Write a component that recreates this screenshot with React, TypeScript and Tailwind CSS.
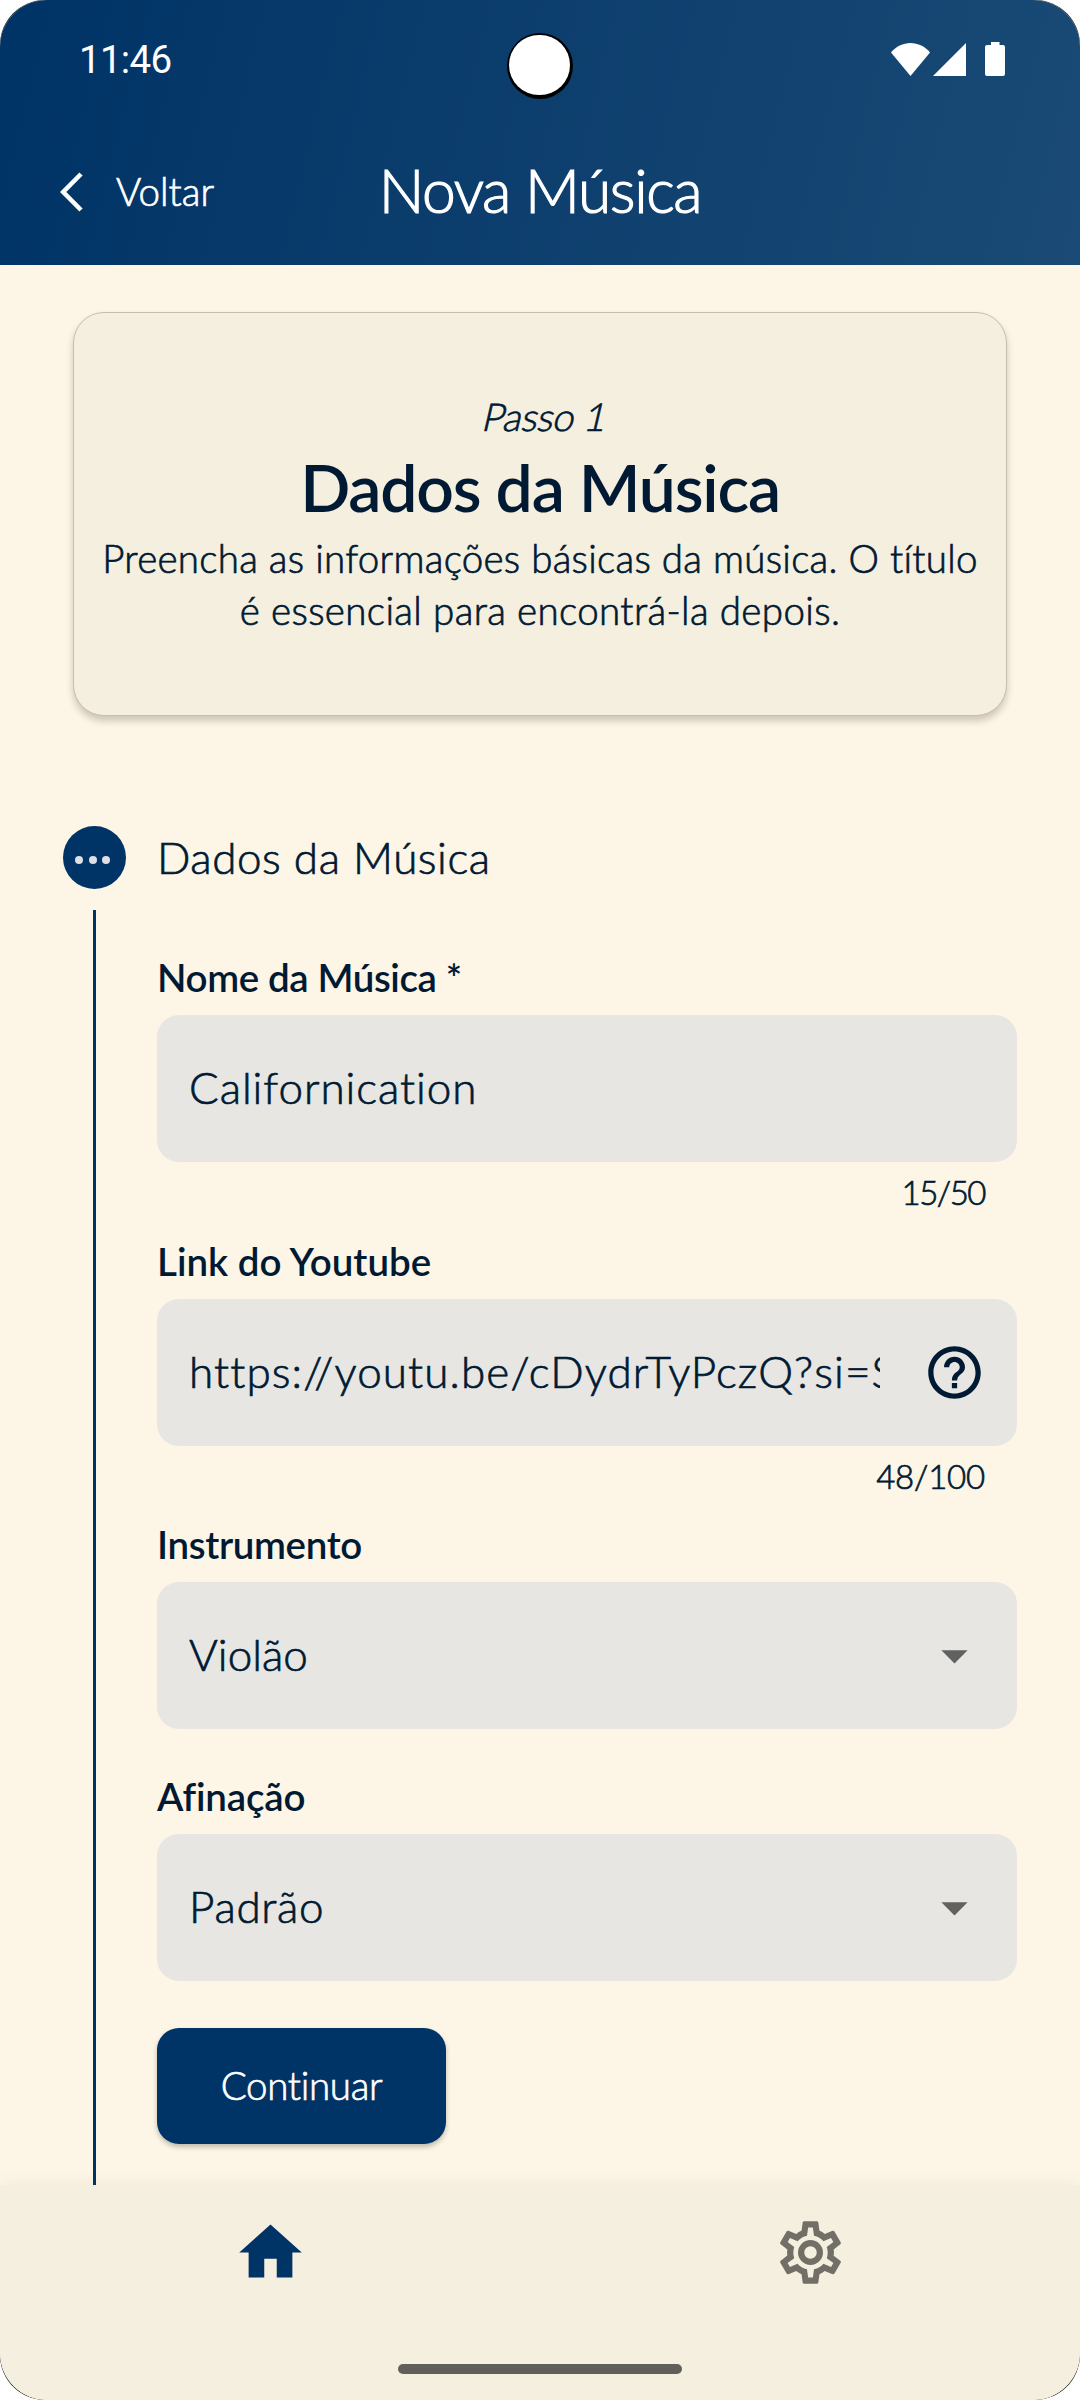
import type { ReactNode } from 'react';

const light = 'font-light [-webkit-text-stroke:0.7px_currentColor]';

function Label({ children, className }: { children: ReactNode; className: string }) {
  return (
    <div className={`h-[46px] mb-4 pt-px text-[38.5px] leading-[46px] font-semibold whitespace-nowrap ${className}`}>{children}</div>
  );
}

function Field({ children, icon, className }: { children: ReactNode; icon?: ReactNode; className: string }) {
  return (
    <div className="flex h-[147px] w-[860px] items-center justify-between rounded-[22px] bg-[#e7e6e2] pl-[32px] pr-[31px]">
      <div className={`w-[691px] overflow-hidden pb-[3px] text-[44px] leading-[56px] whitespace-nowrap ${light} ${className}`}>{children}</div>
      {icon}
    </div>
  );
}

function HelpIcon() {
  return (
    <svg viewBox="0 0 24 24" className="size-[63px] shrink-0 fill-[#001a33]">
      <path d="M11 18h2v-2h-2v2zm1-16C6.48 2 2 6.48 2 12s4.48 10 10 10 10-4.48 10-10S17.52 2 12 2zm0 18c-4.41 0-8-3.59-8-8s3.59-8 8-8 8 3.59 8 8-3.59 8-8 8zm0-14c-2.21 0-4 1.79-4 4h2c0-1.1.9-2 2-2s2 .9 2 2c0 2-3 1.75-3 5h2c0-2.25 3-2.5 3-5 0-2.21-1.79-4-4-4z" />
    </svg>
  );
}

function DropIcon() {
  return (
    <svg viewBox="0 0 24 24" className="size-[63px] shrink-0 fill-[#61615f]">
      <path d="M7 10l5 5 5-5z" />
    </svg>
  );
}

export default function App() {
  return (
    <div className="h-[2400px] w-[1080px] overflow-hidden rounded-[45px] bg-[#1c1c1c] font-['Lato','Open_Sans',sans-serif] text-[#001a33]">
      <div className="relative flex h-full flex-col overflow-hidden rounded-[47px] bg-[#fdf5e6]">
        <header className="h-[265px] shrink-0 bg-linear-[103.8deg,#003366,#1a4a75] text-white">
          <div className="flex h-[118px] items-center justify-between pr-[75px] pl-[79px]">
            <span className="pt-px font-['Roboto',sans-serif] text-[38.5px] leading-[46px] tracking-[-0.7px]">11:46</span>
            <div className="flex items-center">
              <svg viewBox="0 0 39 33" className="h-[33px] w-[39px] fill-white">
                <path d="M19.5 33 0 9.5C5 3.5 12 0 19.5 0S34 3.5 39 9.5z" />
              </svg>
              <svg viewBox="0 0 33 33" className="ml-[3px] h-[33px] w-[33px] fill-white">
                <path d="M33 0v33H0z" />
              </svg>
              <svg viewBox="0 0 20 34" className="ml-[19px] h-[34px] w-[20px] fill-white">
                <path d="M6 0h8.5v3H18a2 2 0 0 1 2 2v27a2 2 0 0 1-2 2H2a2 2 0 0 1-2-2V5a2 2 0 0 1 2-2h4z" />
              </svg>
            </div>
          </div>
          <div className="grid h-[147px] grid-cols-[1fr_auto_1fr] items-center">
            <div className="flex items-center pl-[60px]">
              <svg viewBox="0 0 23 40" className="h-[40px] w-[23px] fill-none stroke-white stroke-[4.6]">
                <path d="M21 2 3.2 20 21 38" />
              </svg>
              <span className={`ml-[33px] pb-[1px] text-[38.5px] leading-[46px] tracking-[0.01px] ${light}`}>Voltar</span>
            </div>
            <h1 className="pb-[4px] text-[60.5px] leading-[72px] font-light tracking-[-1.4px] [-webkit-text-stroke:1.2px_currentColor]">Nova Música</h1>
          </div>
        </header>

        {/* camera cut-out */}
        <div className="absolute top-[33px] left-[507px] size-[66px] rounded-full bg-black pt-[1.5px] pl-[2px]">
          <div className="size-[60.5px] rounded-full bg-white" />
        </div>

        <section className="mx-[73px] mt-[47px] h-[404px] w-[934px] shrink-0 rounded-[31px] border border-[#c5beae] bg-[#f5efdf] pt-[77px] text-center shadow-[0_5px_7px_rgba(60,50,30,0.24)]">
          <p className={`pl-[11px] text-[38.5px] leading-[52px] tracking-[-0.55px] ${light}`}>
            <span className="inline-block -skew-x-[13deg]">Passo 1</span>
          </p>
          <h2 className="mt-[5px] text-[66px] leading-[80px] font-semibold tracking-[-1.2px]">Dados da Música</h2>
          <p className={`mt-[5px] text-[38.5px] leading-[52px] whitespace-nowrap ${light}`}>
            <span className="tracking-[0.28px]">Preencha as informações básicas da música. O título</span>
            <br />
            <span className="tracking-[0.37px]">é essencial para encontrá-la depois.</span>
          </p>
        </section>

        <div className="mt-[110px] flex h-[63px] shrink-0 items-center pl-[63px]">
          <div className="flex size-[63px] items-center justify-center gap-[5.5px] rounded-full bg-[#003366] pt-1 pr-1">
            <i className="size-2 rounded-full bg-[#dde1e6]" />
            <i className="size-2 rounded-full bg-[#dde1e6]" />
            <i className="size-2 rounded-full bg-[#dde1e6]" />
          </div>
          <span className={`ml-[31px] pb-[2px] text-[44px] leading-[56px] tracking-[0.55px] ${light}`}>Dados da Música</span>
        </div>

        <div className="mt-[21px] flex h-[1275px] shrink-0 pl-[93px]">
          <div className="w-[3px] bg-[#003366]" />
          <div className="ml-[61px] w-[860px] pt-[43px]">
            <Label className="tracking-[-0.4px]">Nome da Música *</Label>
            <Field className="tracking-[0.95px]">Californication</Field>
            <div className={`mt-[9px] h-[40px] pr-[32px] text-right text-[33px] leading-[42px] tracking-[-1.5px] ${light}`}>15/50</div>

            <Label className="mt-[26px] tracking-[0.01px]">Link do Youtube</Label>
            <Field className="tracking-[1.12px]" icon={<HelpIcon />}>https://youtu.be/cDydrTyPczQ?si=S</Field>
            <div className={`mt-[9px] h-[40px] pr-[32px] text-right text-[33px] leading-[42px] tracking-[-0.2px] ${light}`}>48/100</div>

            <Label className="mt-[25px] tracking-[-0.35px]">Instrumento</Label>
            <Field className="tracking-[0.01px]" icon={<DropIcon />}>Violão</Field>

            <Label className="mt-[43px] tracking-[-0.15px]">Afinação</Label>
            <Field className="tracking-[0.7px]" icon={<DropIcon />}>Padrão</Field>

            <button className={`mt-[47px] flex h-[116px] w-[289px] items-center justify-center rounded-[22px] bg-[#003366] pb-[2px] text-[38.5px] leading-[46px] tracking-[-0.3px] text-white shadow-[0_3px_5px_rgba(60,50,30,0.3)] ${light}`}>
              Continuar
            </button>
          </div>
        </div>

        <nav className="relative flex h-[215px] shrink-0 flex-col items-center bg-[#f5efdf] shadow-[0_0_16px_rgba(90,70,30,0.07)]">
          <div className="grid h-[179px] w-full grid-cols-2 justify-items-center pt-[30px]">
            <svg viewBox="0 0 24 24" className="size-[75px] fill-[#003366]">
              <path d="M10 20v-6h4v6h5v-8h3L12 3 2 12h3v8z" />
            </svg>
            <svg viewBox="0 0 24 24" className="size-[75px] fill-[#726f67]">
              <path d="M12,8A4,4 0 0,1 16,12A4,4 0 0,1 12,16A4,4 0 0,1 8,12A4,4 0 0,1 12,8M12,10A2,2 0 0,0 10,12A2,2 0 0,0 12,14A2,2 0 0,0 14,12A2,2 0 0,0 12,10M10,22C9.75,22 9.54,21.82 9.5,21.58L9.13,18.93C8.5,18.68 7.96,18.34 7.44,17.94L4.95,18.95C4.73,19.03 4.46,18.95 4.34,18.73L2.34,15.27C2.21,15.05 2.27,14.78 2.46,14.63L4.57,12.97L4.5,12L4.57,11L2.46,9.37C2.27,9.22 2.21,8.95 2.34,8.73L4.34,5.27C4.46,5.05 4.73,4.96 4.95,5.05L7.44,6.05C7.96,5.66 8.5,5.32 9.13,5.07L9.5,2.42C9.54,2.18 9.75,2 10,2H14C14.25,2 14.46,2.18 14.5,2.42L14.87,5.07C15.5,5.32 16.04,5.66 16.56,6.05L19.05,5.05C19.27,4.96 19.54,5.05 19.66,5.27L21.66,8.73C21.79,8.95 21.73,9.22 21.54,9.37L19.43,11L19.5,12L19.43,13L21.54,14.63C21.73,14.78 21.79,15.05 21.66,15.27L19.66,18.73C19.54,18.95 19.27,19.04 19.05,18.95L16.56,17.95C16.04,18.34 15.5,18.68 14.87,18.93L14.5,21.58C14.46,21.82 14.25,22 14,22H10M11.25,4L10.88,6.61C9.68,6.86 8.62,7.5 7.85,8.39L5.44,7.35L4.69,8.65L6.8,10.2C6.4,11.37 6.4,12.64 6.8,13.8L4.68,15.36L5.43,16.66L7.86,15.62C8.63,16.5 9.68,17.14 10.87,17.38L11.24,20H12.76L13.13,17.39C14.32,17.14 15.37,16.5 16.14,15.62L18.57,16.66L19.32,15.36L17.2,13.81C17.6,12.64 17.6,11.37 17.2,10.2L19.31,8.65L18.56,7.35L16.15,8.39C15.38,7.5 14.32,6.86 13.12,6.62L12.75,4H11.25Z" />
            </svg>
          </div>
          <div className="h-[10px] w-[284px] rounded-full bg-[#605f5a]" />
        </nav>
      </div>
    </div>
  );
}
